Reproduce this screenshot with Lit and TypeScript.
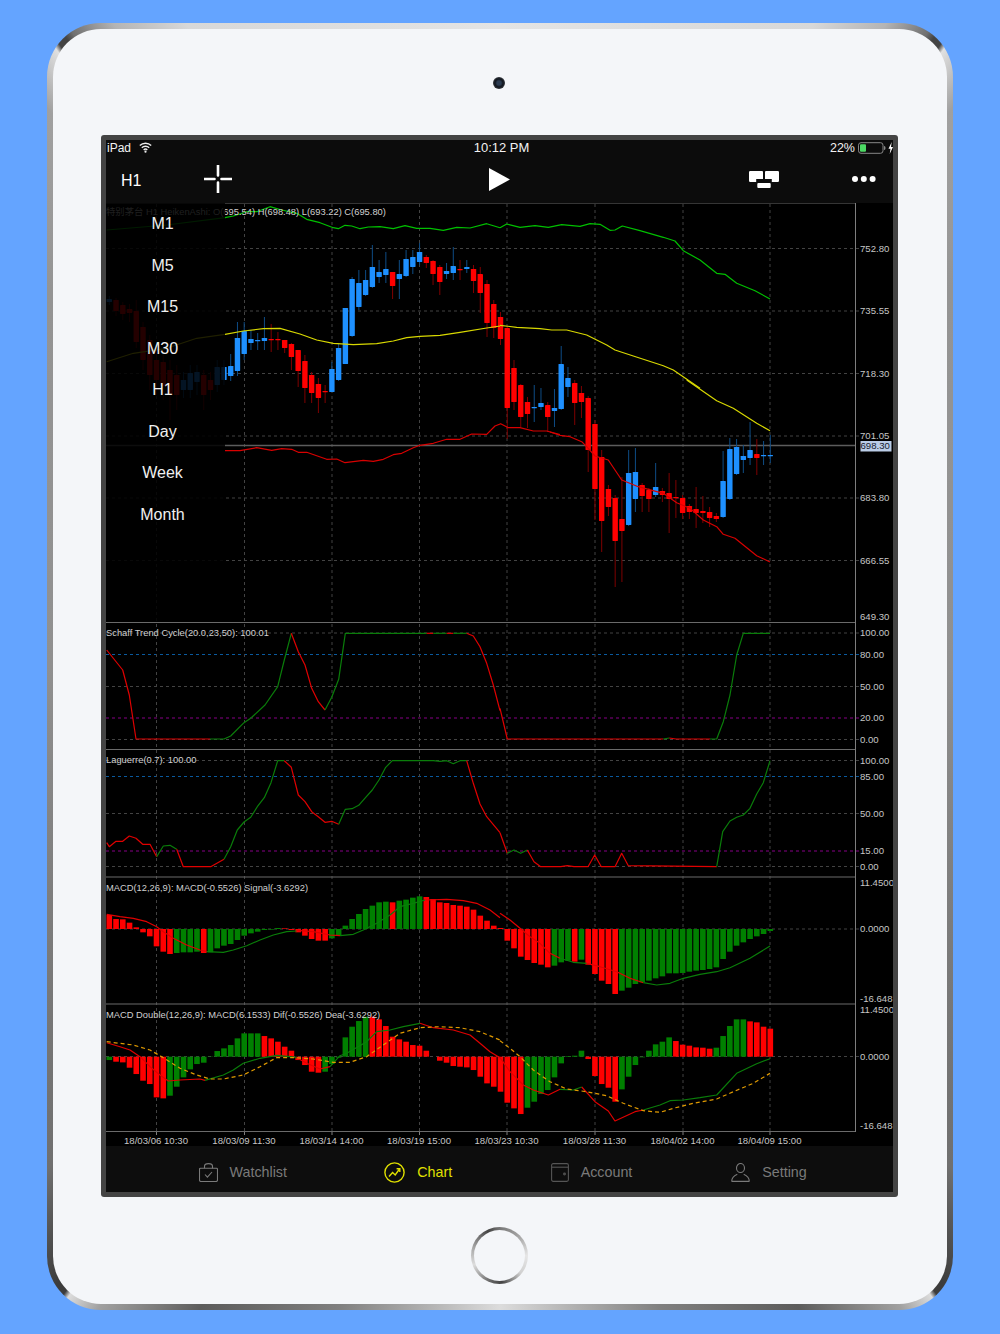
import { LitElement, html, css, svg } from "lit";
import { customElement } from "lit/decorators.js";

/* Chart coordinates are page pixels: the svg viewBox starts at the chart's page offset. */
const barX = (i: number) => 109.3 + 6.745 * i;

/** Convert "zx,zy zx,zy" (3x crop coordinates) into page pixel points. */
const pts = (ox: number, oy: number, s: string) =>
  s
    .trim()
    .split(/\s+/)
    .map((p) => {
      const [a, b] = p.split(",").map(Number);
      return `${(ox + a / 3).toFixed(1)},${(oy + b / 3).toFixed(1)}`;
    })
    .join(" ");

type Candle = [number, number, number, number, "b" | "r"];

const FAINT: [number, Candle][] = [
  [0, [299, 302, 296, 305, "b"]],
  [1, [300, 311, 298, 316, "r"]],
  [2, [305, 314, 302, 320, "r"]],
  [3, [309, 313, 304, 322, "r"]],
  [4, [311, 342, 300, 348, "r"]],
  [5, [327, 360, 322, 370, "r"]],
  [6, [340, 375, 335, 390, "r"]],
  [7, [360, 380, 350, 395, "r"]],
  [8, [362, 386, 355, 400, "r"]],
  [9, [370, 395, 360, 420, "r"]],
  [10, [375, 395, 365, 410, "r"]],
  [11, [380, 390, 372, 398, "b"]],
  [12, [373, 390, 365, 398, "b"]],
  [13, [372, 382, 365, 395, "b"]],
  [14, [375, 395, 370, 410, "r"]],
  [15, [380, 390, 372, 400, "r"]],
  [16, [367, 385, 360, 392, "b"]],
  [17, [367, 380, 360, 385, "b"]],
];

const CANDLES: Candle[] = [
  [366, 376, 354, 381, "b"], [338, 371, 322, 376, "b"], [331, 354, 322, 360, "b"], [339, 343, 330, 350, "b"],
  [340, 341, 333, 350, "b"], [338, 341, 317, 350, "b"], [339, 340, 324, 352, "r"], [339, 340, 332, 350, "r"],
  [340, 348, 340, 353, "r"], [344, 357, 343, 370, "r"], [350, 371, 350, 387, "r"], [361, 388, 355, 403, "r"],
  [375, 393, 372, 403, "r"], [384, 398, 378, 413, "r"], [391, 392, 385, 403, "r"], [369, 392, 362, 392, "b"],
  [348, 380, 343, 381, "b"], [308, 364, 308, 364, "b"], [279, 336, 277, 337, "b"], [283, 307, 270, 310, "b"],
  [280, 295, 270, 296, "b"], [267, 287, 245, 288, "b"], [272, 277, 260, 283, "b"], [269, 275, 252, 283, "b"],
  [272, 286, 272, 299, "r"], [274, 279, 260, 299, "b"], [259, 276, 250, 277, "b"], [257, 267, 250, 274, "b"],
  [252, 262, 243, 265, "b"], [257, 263, 255, 268, "r"], [261, 274, 260, 285, "r"], [267, 282, 265, 295, "r"],
  [271, 274, 263, 279, "b"], [266, 273, 247, 280, "b"], [269, 270, 260, 280, "r"], [267, 269, 260, 273, "b"],
  [269, 281, 265, 293, "r"], [274, 293, 267, 313, "r"], [284, 323, 280, 337, "r"], [304, 328, 300, 338, "r"],
  [317, 339, 312, 345, "r"], [328, 408, 326, 439, "r"], [368, 402, 360, 410, "r"], [385, 417, 384, 427, "r"],
  [402, 414, 397, 428, "r"], [407, 408, 385, 422, "b"], [403, 407, 388, 410, "b"], [405, 417, 402, 432, "r"],
  [408, 411, 389, 427, "b"], [364, 409, 346, 410, "b"], [378, 387, 367, 397, "b"], [383, 403, 380, 425, "r"],
  [393, 402, 386, 418, "r"], [398, 450, 396, 472, "r"], [424, 489, 420, 520, "r"], [457, 521, 450, 552, "r"],
  [489, 507, 485, 516, "r"], [498, 541, 495, 587, "r"], [519, 531, 477, 582, "r"], [473, 525, 450, 526, "b"],
  [472, 499, 448, 512, "b"], [485, 496, 483, 512, "r"], [490, 499, 488, 512, "r"], [487, 495, 463, 497, "b"],
  [491, 495, 488, 502, "r"], [493, 499, 473, 533, "r"], [497, 498, 480, 518, "r"], [498, 513, 495, 519, "r"],
  [506, 512, 504, 519, "r"], [509, 513, 487, 528, "r"], [511, 513, 496, 523, "r"], [512, 518, 507, 527, "r"],
  [516, 519, 513, 522, "r"], [481, 517, 451, 518, "b"], [449, 499, 438, 500, "b"], [447, 474, 439, 475, "b"],
  [456, 460, 445, 473, "b"], [450, 458, 422, 465, "b"], [454, 458, 439, 475, "r"], [455, 456, 441, 465, "b"],
  [455, 456, 435, 463, "b"],
];

/* Histogram values in 3x crop units, positive up; the prefix gives the colour (r / g). */
const MACD =
  "r42 r30 r29 r19 r5 r-10 r-22 r-52 r-68 r-75 g-72 g-70 g-70 g-68 r-72 g-70 g-58 g-50 g-45 g-33 g-20 g-13 g-8 g-3 g-2 g3 r2 r-3 r-10 r-20 r-30 r-35 r-35 g-28 g-20 g10 g30 g45 g60 g70 g80 g82 r80 g85 g88 g94 g98 r96 r90 r80 r78 r72 r70 r67 r58 r40 r25 r10 r3 " +
  "r-35 r-58 r-83 r-93 r-102 r-107 r-115 g-110 g-100 g-95 r-98 g-92 r-107 r-135 r-155 r-165 r-195 g-185 g-176 g-165 g-160 g-155 g-148 g-142 g-133 g-133 g-132 g-128 g-125 g-123 g-120 g-115 g-90 g-68 g-50 g-40 g-30 g-22 g-15 g-6";
const DOUBLE =
  "g-10 r-15 r-17 r-33 r-52 r-72 r-82 r-122 r-125 g-117 g-90 g-62 g-38 g-22 g-18 g1 g17 g25 g35 g55 g70 g70 g70 r62 r55 r45 r30 r18 r-10 r-25 r-45 r-48 g-45 g-22 g-3 g58 g90 g107 g120 r120 r112 r92 r60 r52 r45 r35 r33 r18 r0 r-12 r-18 r-28 r-30 r-32 r-40 r-60 r-80 r-90 r-105 " +
  "r-138 r-155 r-172 g-153 g-135 g-112 g-100 g-62 g-20 g2 g3 g18 r-7 r-58 r-82 r-93 r-135 g-98 g-60 g-25 g-2 g18 g37 g45 g58 r47 r36 r33 r28 r27 r24 g27 g62 g92 g112 g112 r106 r103 r90 r84";

const LINE_RED = "#e00000";
const LINE_GREEN = "#0a7d0a";

type Seg = [string, number, number, string];

const SEGMENTS: Seg[] = [
  /* price bands */
  ["#00c000", 100, 130, "20,300 200,285 375,263 400,258 440,245 470,245 510,230 545,240 590,250 620,268 660,278 700,293 715,296 735,286 755,288 780,296 805,291 840,290 880,296 915,287 950,295 990,295 1030,301 1070,292 1110,294 1160,281 1200,293"],
  ["#00c000", 500, 130, "0,293 20,282 60,292 105,287 145,292 185,284 240,289 270,281 300,283 330,301 345,300 367,288 420,302 490,322 525,333 550,362 600,390 650,430 675,433 710,460 765,482 810,507"],
  ["#d8d800", 100, 130, "20,695 100,670 200,655 290,625 375,613 430,603 490,596 540,595 600,612 650,630 700,640 760,644 830,641 880,633 920,623 960,619 1020,616 1080,607 1160,594 1200,588"],
  ["#d8d800", 500, 130, "0,586 50,592 120,596 155,600 200,600 260,615 320,645 345,660 400,678 490,707 520,720 600,775"],
  ["#d8d800", 550, 380, "410,0 500,62 550,85 620,130 660,152"],
  ["#d80000", 220, 380, "15,212 60,212 110,203 155,211 185,206 215,208 235,217 260,217 320,238 350,237 375,248 430,241 460,244 490,238 520,224 545,220 580,203 600,196 640,190 680,178 720,178 755,162 800,163 825,138 842,131 865,143 900,143 940,153 980,153 1020,164"],
  ["#d80000", 550, 380, "0,156 30,166 60,170 95,185 110,200 135,228 175,240 215,300 265,320 340,340 380,368 420,385 460,420 500,440 520,463 555,475 620,527 660,546"],
  /* Schaff */
  [LINE_RED, 100, 620, "20,90 68,150 88,225 108,357 330,357"],
  [LINE_GREEN, 100, 620, "330,357 372,357 392,348 432,308 452,295 495,255 533,200 553,120 574,40"],
  [LINE_RED, 100, 620, "574,40 595,95 615,135 635,205 655,245 675,270"],
  [LINE_GREEN, 100, 620, "675,270 695,232 716,178 736,40 980,40"],
  [LINE_RED, 100, 620, "980,40 1000,40"],
  [LINE_GREEN, 100, 620, "1000,40 1040,40"],
  [LINE_RED, 100, 620, "1040,40 1060,40"],
  [LINE_GREEN, 100, 620, "1060,40 1100,40"],
  [LINE_RED, 100, 620, "1100,40 1120,48 1140,80 1160,130 1180,195 1200,272"],
  [LINE_RED, 500, 620, "0,265 22,357 490,357"],
  [LINE_GREEN, 500, 620, "490,357 508,354"],
  [LINE_RED, 500, 620, "508,354 528,357 630,357"],
  [LINE_GREEN, 500, 620, "630,357 650,357 670,305 690,225 710,105 730,40 810,40"],
  /* Laguerre */
  [LINE_RED, 100, 620, "20,668 28,680 48,664 68,664 88,648 108,655 128,673 150,673 170,710"],
  [LINE_GREEN, 100, 620, "170,710 190,678 210,676 230,688"],
  [LINE_RED, 100, 620, "230,688 250,740 332,740 372,718"],
  [LINE_GREEN, 100, 620, "372,718 392,680 412,630 432,606 452,592 472,560 493,533 513,488 533,422 553,422"],
  [LINE_RED, 100, 620, "553,422 574,442 595,525 615,545 635,575 655,590 675,607 695,604 716,613"],
  [LINE_GREEN, 100, 620, "716,613 736,568 756,566 776,556 797,532 817,510 837,480 857,442 877,422 1000,422 1020,424 1040,422 1060,431 1080,422 1100,422"],
  [LINE_RED, 100, 620, "1100,422 1120,490 1140,552 1160,590 1200,638"],
  [LINE_RED, 500, 620, "0,638 22,700"],
  [LINE_GREEN, 500, 620, "22,700 42,690 62,700 82,690"],
  [LINE_RED, 500, 620, "82,690 102,725 122,740 182,740 202,737 222,740 264,740 284,705 304,740 345,740 365,700 385,737 650,740"],
  [LINE_GREEN, 500, 620, "650,740 668,635 690,603 710,592 730,585 750,565 770,522 790,488 810,422"],
];

const OVER_BARS: Seg[] = [
  /* MACD signal */
  [LINE_RED, 100, 875, "20,118 60,125 100,130 140,140 170,155 190,170 220,190 260,210 300,225 320,230"],
  [LINE_GREEN, 100, 875, "320,230 370,232 400,225 440,212 480,195 520,180 560,170 590,168"],
  [LINE_RED, 100, 875, "590,166 640,170 690,180 720,182"],
  [LINE_GREEN, 100, 875, "720,182 760,178 790,165 830,145 870,120 900,95 940,85 975,75"],
  [LINE_RED, 100, 875, "975,75 1040,73 1090,77 1130,85 1170,105 1200,128"],
  [LINE_RED, 500, 875, "0,115 30,135 60,160 90,185 120,205 150,235 180,250"],
  [LINE_GREEN, 500, 875, "180,250 220,262 260,265"],
  [LINE_RED, 500, 875, "260,265 300,275 350,290 390,310 430,323"],
  [LINE_GREEN, 500, 875, "430,323 470,330 510,325 550,310 600,298 650,290 690,278 750,250 810,213"],
  /* MACD double dif */
  [LINE_RED, 100, 875, "20,503 60,515 90,525 120,545 150,575 180,600 205,618 240,615 300,612 315,616"],
  [LINE_GREEN, 100, 875, "315,616 370,600 400,585 430,565 480,550 530,541 570,545 590,548"],
  [LINE_RED, 100, 875, "590,548 620,565 660,582 690,575"],
  [LINE_GREEN, 100, 875, "690,575 720,542 740,535 800,500 830,470 870,465 910,455 960,445"],
  [LINE_RED, 100, 875, "960,445 1000,458 1060,465 1110,480 1140,505 1170,530 1200,548"],
  [LINE_RED, 500, 875, "0,548 30,590 70,630 100,645 145,660 180,643"],
  [LINE_GREEN, 500, 875, "180,643 220,645 245,636"],
  [LINE_RED, 500, 875, "245,636 285,680 325,708 345,738 405,710 430,705"],
  [LINE_GREEN, 500, 875, "430,705 480,690 510,677 550,675 600,668 650,660 710,595 770,566 810,551"],
];

const DEA: [number, number, string][] = [
  [100, 875, "20,500 100,510 150,525 190,548 240,580 290,600 330,612 370,612 430,600 480,575 530,548 580,548 640,552 700,562 750,562 800,545 850,510 900,475 960,458 1020,455 1080,458 1140,470 1200,495"],
  [500, 875, "0,497 30,520 60,545 100,585 150,620 200,642 260,650 320,662 370,685 430,707 480,712 520,700 580,685 650,672 700,650 760,625 810,595"],
];

const V_GRID = [156.5, 244.5, 332, 419.5, 507, 595, 683, 770];
const DATES = ["18/03/06 10:30", "18/03/09 11:30", "18/03/14 14:00", "18/03/19 15:00", "18/03/23 10:30", "18/03/28 11:30", "18/04/02 14:00", "18/04/09 15:00"];
const H_GRID: [number, string][] = [
  [248.5, "g"], [311, "g"], [373.5, "g"], [436, "g"], [498, "g"], [560.5, "g"],
  [633, "g"], [654.5, "b"], [686.5, "g"], [718, "p"], [739.5, "g"],
  [760.5, "g"], [776.5, "b"], [813.5, "g"], [851, "p"], [866.5, "g"],
  [929, "g"], [1056.5, "g"],
];
const AXIS: [number, string][] = [
  [248.5, "752.80"], [310.5, "735.55"], [373, "718.30"], [435.5, "701.05"], [497.5, "683.80"], [560, "666.55"], [616.5, "649.30"],
  [632.5, "100.00"], [654, "80.00"], [686, "50.00"], [717.5, "20.00"], [739, "0.00"],
  [760, "100.00"], [776, "85.00"], [813, "50.00"], [850.5, "15.00"], [866.5, "0.00"],
  [882.5, "11.4500"], [928.5, "0.0000"], [998.5, "-16.648"],
  [1009.5, "11.4500"], [1056, "0.0000"], [1125.5, "-16.648"],
];
const TITLES: [number, string][] = [
  [632.5, "Schaff Trend Cycle(20.0,23,50): 100.01"],
  [760, "Laguerre(0.7): 100.00"],
  [887.5, "MACD(12,26,9): MACD(-0.5526) Signal(-3.6292)"],
  [1014.5, "MACD Double(12,26,9): MACD(6.1533) Dif(-0.5526) Dea(-3.6292)"],
];
const SEPARATORS = [622.5, 749.5, 877, 1004, 1131.5];
const MENU = ["M1", "M5", "M15", "M30", "H1", "Day", "Week", "Month"];

function candle(i: number, c: Candle) {
  const x = barX(i);
  const [top, bot, wt, wb, k] = c;
  return svg`
    <line x1=${x} x2=${x} y1=${wt} y2=${wb} class=${k === "b" ? "wick-b" : "wick-r"}></line>
    <rect x=${x - 2.7} y=${top} width="5.4" height=${Math.max(bot - top, 1.2)} rx="0.4" class=${k === "b" ? "body-b" : "body-r"}></rect>`;
}

function hist(data: string, zero: number) {
  return data.split(" ").map((t, i) => {
    const v = Number(t.slice(1)) / 3;
    const y = v > 0 ? zero - v : zero;
    return svg`<rect x=${barX(i) - 2.8} y=${y} width="5.6" height=${Math.abs(v)} class=${t[0] === "r" ? "bar-r" : "bar-g"}></rect>`;
  });
}

@customElement("app-root")
export class AppRoot extends LitElement {
  static styles = css`
    :host {
      display: block;
      box-sizing: border-box;
      width: 1000px;
      height: 1334px;
      padding: 23px 47px 24px;
      background: #64a4ff;
      font-family: "Liberation Sans", "Noto Sans CJK SC", sans-serif;
    }
    .frame {
      height: 1287px;
      box-sizing: border-box;
      padding: 6px;
      border-radius: 54px;
      background: conic-gradient(
        #e4e4e4 0deg,
        #d8d8d8 26deg,
        #b4b4b4 31deg,
        #707070 34deg,
        #444 34.6deg,
        #444 35.3deg,
        #e0e0e0 35.7deg,
        #a0a0a0 39deg,
        #949494 50deg,
        #909090 90deg,
        #707070 138deg,
        #3c3c3c 144.4deg,
        #3c3c3c 145.2deg,
        #dcdcdc 145.6deg,
        #a0a0a0 148deg,
        #5c5c5c 155deg,
        #808080 166deg,
        #dcdcdc 180deg,
        #808080 194deg,
        #5c5c5c 205deg,
        #a0a0a0 212deg,
        #dcdcdc 214.4deg,
        #3c3c3c 214.8deg,
        #3c3c3c 215.6deg,
        #707070 222deg,
        #909090 270deg,
        #949494 310deg,
        #a0a0a0 321deg,
        #e0e0e0 324.3deg,
        #444 324.7deg,
        #444 325.4deg,
        #707070 326deg,
        #b4b4b4 329deg,
        #d8d8d8 334deg,
        #e4e4e4 360deg
      );
    }
    .body {
      height: 100%;
      box-sizing: border-box;
      padding-top: 48px;
      border-radius: 48px;
      background: #f4f6f9;
      display: flex;
      flex-direction: column;
      align-items: center;
    }
    .camera {
      width: 12px;
      height: 12px;
      border-radius: 50%;
      background: radial-gradient(circle at 50% 50%, #2c3c52 0 2px, #10151d 4px, #33373d 6px);
      margin-left: -2px;
      flex: none;
    }
    .screen {
      align-self: flex-start;
      margin: 46px 0 0 48px;
      width: 797px;
      height: 1062px;
      box-sizing: border-box;
      padding: 5px;
      background: #444;
      border-radius: 3px;
      display: flex;
      flex-direction: column;
      flex: none;
    }
    .home {
      width: 57px;
      height: 57px;
      margin: 30px 0 0 -1px;
      border-radius: 50%;
      flex: none;
      display: flex;
      align-items: center;
      justify-content: center;
      background: conic-gradient(#777 0deg, #aaa 50deg, #e6e6e6 90deg, #d0d0d0 130deg, #444 175deg, #666 200deg, #ddd 250deg, #aaa 285deg, #444 335deg, #777 360deg);
    }
    .home-in {
      width: 51px;
      height: 51px;
      border-radius: 50%;
      background: #f4f6f9;
    }
    .status {
      height: 18px;
      box-sizing: border-box;
      padding: 0 0 6px 4px;
      flex: none;
      display: grid;
      grid-template-columns: 1fr auto 1fr;
      align-items: center;
      background: #0c0c0c;
      color: #f2f2f2;
      font-size: 12px;
    }
    .status-left {
      display: flex;
      align-items: center;
      gap: 8px;
      margin-left: -3px;
    }
    .status-time {
      font-size: 13px;
    }
    .status-right {
      display: flex;
      align-items: center;
      justify-content: flex-end;
      gap: 3px;
      font-size: 12.5px;
    }
    .toolbar {
      height: 45px;
      box-sizing: border-box;
      flex: none;
      padding: 0 0 3px 15px;
      background: #0c0c0c;
      display: grid;
      grid-template-columns: 83px 285px 260px 103px auto;
      align-items: center;
      color: #fff;
      font-size: 16px;
    }
    .toolbar-label {
      padding-top: 4px;
    }
    .toolbar svg,
    .status svg {
      display: block;
    }
    .chart {
      position: relative;
      flex: none;
      height: 943px;
      background: #000;
    }
    .chart > svg {
      display: block;
    }
    .menu {
      position: absolute;
      left: 0;
      top: 0;
      width: 119px;
      height: 419px;
      box-sizing: border-box;
      padding-right: 6px;
      background: rgba(0, 0, 0, 0.86);
      display: flex;
      flex-direction: column;
      align-items: center;
      color: #f0f0f0;
      font-size: 16px;
    }
    .menu div {
      height: 41.5px;
      line-height: 41.5px;
      flex: none;
    }
    .tabs {
      height: 46px;
      flex: none;
      box-sizing: border-box;
      padding: 6px 0 0 49px;
      background: #0d0d0d;
      display: grid;
      grid-template-columns: 175.5px 175.5px 171px 184px;
    }
    .tab {
      display: flex;
      align-items: center;
      justify-content: center;
      gap: 12px;
      color: #7a7a7a;
      font-size: 14.3px;
    }
    .tab.on {
      color: #e0e000;
    }
    .tab svg {
      display: block;
      flex: none;
    }
    line,
    polyline,
    path {
      fill: none;
    }
    .grid-g { stroke: #434343; stroke-dasharray: 3 3; }
    .grid-b { stroke: #0a5a9e; stroke-dasharray: 3 3; }
    .grid-p { stroke: #860086; stroke-dasharray: 3 3; }
    .sep { stroke: #6a6a6a; stroke-width: 1.2; }
    .axis { stroke: #7e7e7e; }
    .priceline { stroke: #5c5c5c; stroke-width: 1.3; }
    .wick-b { stroke: #0e4c85; }
    .wick-r { stroke: #7e0000; }
    .body-b { fill: #1e90ff; }
    .body-r { fill: #ff0000; }
    .bar-r { fill: #ff0000; }
    .bar-g { fill: #008000; }
    .dea { stroke: #e09a00; stroke-width: 1.2; stroke-dasharray: 4 3; }
    .trace { stroke-width: 1.2; stroke-linejoin: round; }
    .lab { fill: #c6c6c6; font-size: 9.6px; dominant-baseline: central; }
    .date { fill: #c6c6c6; font-size: 9.6px; text-anchor: middle; dominant-baseline: central; }
    .title { fill: #d0d0d0; font-size: 9.35px; dominant-baseline: central; }
    .price-bg { fill: #bacce6; }
    .price-tx { fill: #16202c; font-size: 9.6px; dominant-baseline: central; }
    .fill-w { fill: #fff; }
    .batt-cap { fill: #888; }
  `;

  private chart() {
    return html`
      <svg width="787" height="943" viewBox="106 203 787 943">
        <line x1="106" x2="856" y1="203" y2="203" class="sep"></line>
        ${H_GRID.map(([y, k]) => svg`<line x1="106" x2="859" y1=${y} y2=${y} class=${"grid-" + k}></line>`)}
        ${V_GRID.map((x) => svg`<line x1=${x} x2=${x} y1="204" y2="1131" class="grid-g"></line>
          <line x1=${x} x2=${x} y1="1131" y2="1135" class="axis"></line>`)}
        <line x1="106" x2="856" y1="445.5" y2="445.5" class="priceline"></line>
        ${SEPARATORS.map((y) => svg`<line x1="106" x2="856" y1=${y} y2=${y} class="sep"></line>`)}
        <line x1="855.5" x2="855.5" y1="203" y2="1132" class="axis"></line>
        ${FAINT.map(([i, c]) => candle(i, c))}
        ${CANDLES.map((c, i) => candle(i + 18, c))}
        ${SEGMENTS.map(([color, ox, oy, s]) => svg`<polyline class="trace" stroke=${color} points=${pts(ox, oy, s)}></polyline>`)}
        ${hist(MACD, 929)}
        ${hist(DOUBLE, 1056.7)}
        ${OVER_BARS.map(([color, ox, oy, s]) => svg`<polyline class="trace" stroke=${color} points=${pts(ox, oy, s)}></polyline>`)}
        ${DEA.map(([ox, oy, s]) => svg`<polyline class="dea" points=${pts(ox, oy, s)}></polyline>`)}
        <text x="106" y="212" class="title">特别茅台 H1 HeikenAshi: O(695.54) H(698.48) L(693.22) C(695.80)</text>
        ${TITLES.map(([y, t]) => svg`<text x="106" y=${y} class="title">${t}</text>`)}
        ${AXIS.map(([y, t]) => svg`<text x="860" y=${y} class="lab">${t}</text>`)}
        <rect x="860.5" y="441" width="31" height="10.5" class="price-bg"></rect>
        <text x="860.5" y="445.8" class="price-tx">698.30</text>
        ${V_GRID.map((x, i) => svg`<text x=${x - 0.5} y="1140" class="date">${DATES[i]}</text>`)}
      </svg>
      <div class="menu">${MENU.map((m) => html`<div>${m}</div>`)}</div>
    `;
  }

  render() {
    return html`
      <div class="frame">
        <div class="body">
          <div class="camera"></div>
          <div class="screen">
            <div class="status">
              <div class="status-left">
                <span>iPad</span>
                <svg width="13" height="11" viewBox="0 0 13 11">
                  <path d="M.8 3.6a8.2 8.2 0 0 1 11.4 0" stroke="#eee" stroke-width="1.4"></path>
                  <path d="M2.8 5.8a5.3 5.3 0 0 1 7.4 0" stroke="#eee" stroke-width="1.4"></path>
                  <path d="M4.7 7.9a2.6 2.6 0 0 1 3.6 0" stroke="#eee" stroke-width="1.4"></path>
                  <circle cx="6.5" cy="9.7" r="1.1" fill="#eee"></circle>
                </svg>
              </div>
              <div class="status-time">10:12 PM</div>
              <div class="status-right">
                <span>22%</span>
                <svg width="35" height="12" viewBox="0 0 35 12">
                  <rect x=".5" y=".7" width="24.5" height="10.6" rx="2.5" fill="none" stroke="#888"></rect>
                  <rect x="2" y="2.2" width="6" height="7.6" rx="1" fill="#4cd964"></rect>
                  <path class="batt-cap" d="M26 4v4c1 0 1.5-.8 1.5-2S27 4 26 4z"></path>
                  <path class="fill-w" d="M33.7 0L30.5 6.8h2L31.7 12l3.3-7h-2z"></path>
                </svg>
              </div>
            </div>
            <div class="toolbar">
              <div class="toolbar-label">H1</div>
              <svg width="28" height="28" viewBox="0 0 28 28">
                <path d="M0 14h10.5M17.5 14H28M14 0v10.5M14 17.5V28" stroke="#fff" stroke-width="2.6" stroke-linecap="round"></path>
              </svg>
              <svg width="21" height="23" viewBox="0 0 21 23"><polygon points="0,0 21,11.5 0,23" fill="#fff"></polygon></svg>
              <svg width="30" height="17" viewBox="0 0 30 17" fill="#fff">
                <path class="fill-w" d="M1.2 0H13a1 1 0 0 1 1 1v7H7.2v3H1.2A1.2 1.2 0 0 1 0 9.8V1.2A1.2 1.2 0 0 1 1.2 0z"></path>
                <path class="fill-w" d="M17 0h11.8A1.2 1.2 0 0 1 30 1.2v8.6a1.2 1.2 0 0 1-1.2 1.2h-6V8H16V1a1 1 0 0 1 1-1z"></path>
                <rect x="8.3" y="12" width="13.4" height="5" rx="1"></rect>
              </svg>
              <svg width="24" height="6" viewBox="0 0 24 6" fill="#fff">
                <circle cx="3" cy="3" r="3"></circle><circle cx="11.8" cy="3" r="3"></circle><circle cx="20.6" cy="3" r="3"></circle>
              </svg>
            </div>
            <div class="chart">${this.chart()}</div>
            <div class="tabs">
              <div class="tab">
                <svg width="19" height="19" viewBox="0 0 19 19" stroke="#7a7a7a" stroke-width="1.1">
                  <path d="M1.5 5.2h16a1 1 0 0 1 1 1V17a1.5 1.5 0 0 1-1.5 1.5H2A1.5 1.5 0 0 1 .5 17V6.2a1 1 0 0 1 1-1z"></path>
                  <path d="M5.5 5.2V3.2a4 2.6 0 0 1 8 0v2"></path>
                  <path d="M6 11.5l2.4 2.6L13 9"></path>
                </svg>
                <span>Watchlist</span>
              </div>
              <div class="tab on">
                <svg width="21" height="21" viewBox="0 0 21 21" stroke="#e0e000" stroke-width="1.4">
                  <circle cx="10.5" cy="10.5" r="9.6" fill="none"></circle>
                  <path d="M5 14.5l3.6-4 2.6 2.4L15.5 7"></path>
                  <path d="M12.6 6.8h3.2v3.2"></path>
                </svg>
                <span>Chart</span>
              </div>
              <div class="tab">
                <svg width="18" height="19" viewBox="0 0 18 19" stroke="#555" stroke-width="1.1" fill="none">
                  <rect x=".6" y=".6" width="16.8" height="17.8" rx="1.6"></rect>
                  <path d="M.6 4.2h16.8"></path>
                  <circle cx="13.5" cy="11" r=".9"></circle>
                </svg>
                <span>Account</span>
              </div>
              <div class="tab">
                <svg width="19" height="19" viewBox="0 0 19 19" stroke="#7a7a7a" stroke-width="1.1" fill="none">
                  <ellipse cx="9.5" cy="5" rx="4" ry="4.5"></ellipse>
                  <path d="M.7 18.4c0-4.6 2.8-6 5.6-7.2M18.3 18.4c0-4.6-2.8-6-5.6-7.2M.7 18.4h17.6"></path>
                </svg>
                <span>Setting</span>
              </div>
            </div>
          </div>
          <div class="home"><div class="home-in"></div></div>
        </div>
      </div>
    `;
  }
}
